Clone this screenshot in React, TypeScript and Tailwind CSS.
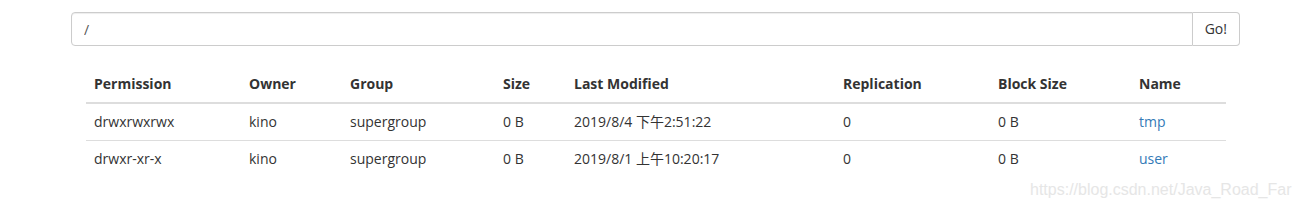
import React from 'react';

const rows = [
  { perm: 'drwxrwxrwx', owner: 'kino', group: 'supergroup', size: '0 B', modified: '2019/8/4 下午2:51:22', repl: '0', block: '0 B', name: 'tmp' },
  { perm: 'drwxr-xr-x', owner: 'kino', group: 'supergroup', size: '0 B', modified: '2019/8/1 上午10:20:17', repl: '0', block: '0 B', name: 'user' },
];

const headers = ['Permission', 'Owner', 'Group', 'Size', 'Last Modified', 'Replication', 'Block Size', 'Name'];
const widths = ['w-[155px]', 'w-[101px]', 'w-[153px]', 'w-[71px]', 'w-[269px]', 'w-[155px]', 'w-[141px]', 'w-[95px]'];

export default function App() {
  return (
    <div
      className="relative w-[1299px] h-[209px] bg-white text-[14px] leading-[20px] text-[#333]"
      style={{ fontFamily: '"Open Sans", "Noto Sans CJK SC", sans-serif' }}
    >
      <div className="pt-[12px] pl-[71px] w-[1240px]">
        <div className="flex h-[34px]">
          <input
            type="text"
            defaultValue="/"
            className="flex-1 h-[34px] px-[12px] border border-[#ccc] rounded-l-[4px] text-[14px] text-[#555] outline-none shadow-[inset_0_1px_1px_rgba(0,0,0,0.075)]"
          />
          <button className="h-[34px] px-[12px] border border-l-0 border-[#ccc] rounded-r-[4px] bg-white text-[#333]">
            Go!
          </button>
        </div>
      </div>

      <div className="pl-[86px] mt-[20px]">
        <table className="w-[1140px] table-fixed border-collapse">
          <thead>
            <tr>
              {headers.map((h, i) => (
                <th key={h} className={`${widths[i]} text-left font-bold p-[8px] border-b-2 border-[#ddd]`}>
                  {h}
                </th>
              ))}
            </tr>
          </thead>
          <tbody>
            {rows.map((r, i) => (
              <tr key={r.name}>
                {[r.perm, r.owner, r.group, r.size, r.modified, r.repl, r.block].map((v, j) => (
                  <td key={j} className={`p-[8px] ${i > 0 ? 'border-t border-[#ddd]' : ''}`}>{v}</td>
                ))}
                <td className={`p-[8px] ${i > 0 ? 'border-t border-[#ddd]' : ''}`}>
                  <a href="#" className="text-[#337ab7]">{r.name}</a>
                </td>
              </tr>
            ))}
          </tbody>
        </table>
      </div>

      <div
        className="absolute left-[1030px] top-[180px] text-[16px] leading-[20px] text-[#e6e6e6]"
        style={{ fontFamily: '"Liberation Sans", Arial, sans-serif' }}
      >
        https://blog.csdn.net/Java_Road_Far
      </div>
    </div>
  );
}
